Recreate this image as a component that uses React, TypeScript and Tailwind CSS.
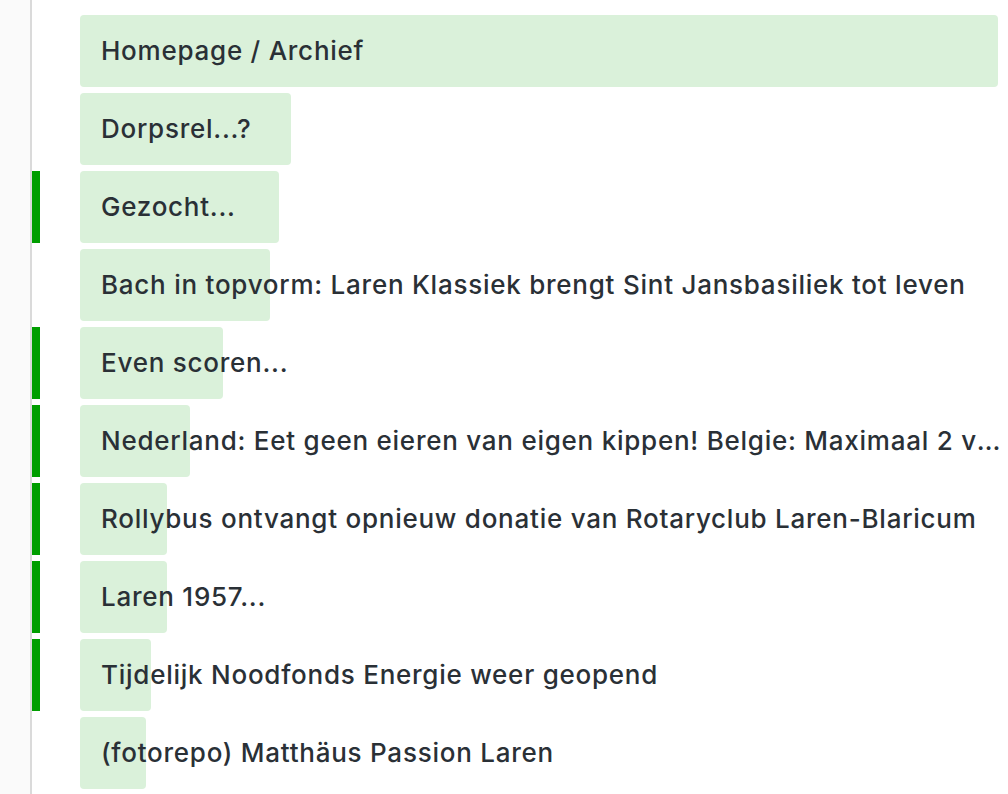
import React from "react";

type Row = { title: string; barWidth: number; marked: boolean };

const rows: Row[] = [
  { title: "Homepage / Archief", barWidth: 918, marked: false },
  { title: "Dorpsrel...?", barWidth: 211, marked: false },
  { title: "Gezocht...", barWidth: 199, marked: true },
  { title: "Bach in topvorm: Laren Klassiek brengt Sint Jansbasiliek tot leven", barWidth: 190, marked: false },
  { title: "Even scoren...", barWidth: 143, marked: true },
  { title: "Nederland: Eet geen eieren van eigen kippen! Belgie: Maximaal 2 vrije uitloop eieren per dag", barWidth: 110, marked: true },
  { title: "Rollybus ontvangt opnieuw donatie van Rotaryclub Laren-Blaricum", barWidth: 87, marked: true },
  { title: "Laren 1957...", barWidth: 87, marked: true },
  { title: "Tijdelijk Noodfonds Energie weer geopend", barWidth: 71, marked: true },
  { title: "(fotorepo) Matthäus Passion Laren", barWidth: 66, marked: false },
];

export default function App() {
  return (
    <div
      className="flex h-[794px] w-[1008px] overflow-hidden bg-white"
      style={{ fontFamily: "Inter, 'Noto Sans', sans-serif" }}
    >
      <div className="h-full w-[30px] shrink-0 bg-[#fafafa]" />
      <div className="h-full w-[2px] shrink-0 bg-[#dadada]" />
      <div className="flex min-w-0 flex-1 flex-col gap-[6px] pt-[15px]">
        {rows.map((r, i) => (
          <div key={i} className="flex h-[72px] shrink-0 items-stretch">
            <div className={`w-[8px] shrink-0 ${r.marked ? "bg-[#009e00]" : ""}`} />
            <div className="relative ml-[40px] mr-[6px] flex min-w-0 flex-1 items-center">
              <div
                className="absolute inset-y-0 left-0 rounded-[4px] bg-[#daf1da]"
                style={{ width: r.barWidth }}
              />
              <span className="relative truncate pl-[21px] text-[26px] font-medium leading-[32px] tracking-[0.75px] text-[#2a3036]">
                {r.title}
              </span>
            </div>
          </div>
        ))}
      </div>
    </div>
  );
}
